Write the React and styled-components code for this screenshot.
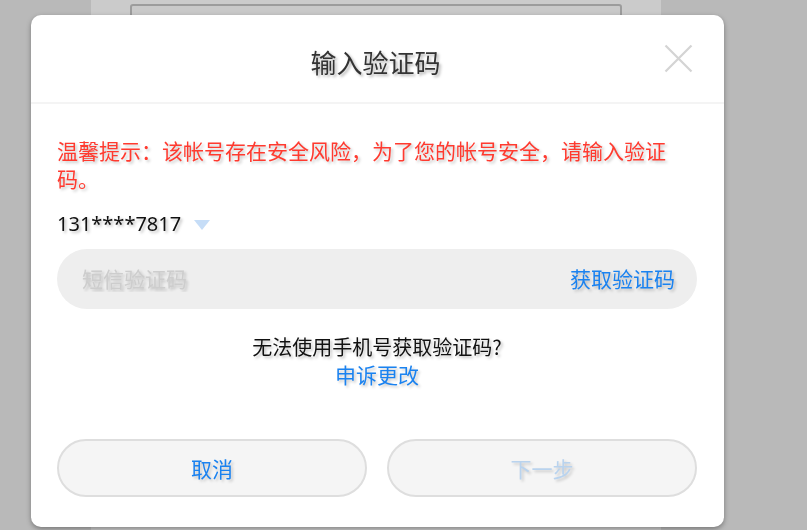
import React from "react";
import styled, { createGlobalStyle } from "styled-components";

const Global = createGlobalStyle`
  html, body { margin: 0; padding: 0; }
  body {
    background: #b9b9b9;
    overflow: hidden;
    font-family: "Noto Sans CJK SC", "Noto Sans", sans-serif;
  }
`;

const Page = styled.div`
  height: 530px;
  display: flex;
  padding-left: 91px;
`;

const BackPanel = styled.div`
  width: 570px;
  height: 100%;
  background: #cbcbcb;
  padding: 4px 0 0 39px;
  box-sizing: border-box;
`;

const BackBox = styled.div`
  width: 492px;
  height: 30px;
  border: 2px solid #9c9c9c;
  border-radius: 3px;
  box-sizing: border-box;
  background: #c9c9c9;
`;

const Dialog = styled.div`
  position: fixed;
  left: 31px;
  top: 15px;
  width: 693px;
  height: 512px;
  background: #fff;
  border-radius: 10px;
  box-shadow: 0 2px 5px rgba(0, 0, 0, 0.35);
  display: flex;
  flex-direction: column;
`;

const Header = styled.div`
  position: relative;
  height: 87px;
  display: flex;
  align-items: center;
  justify-content: center;
  border-bottom: 2px solid #f4f4f4;
`;

const Title = styled.h1`
  margin: 0;
  font-size: 26px;
  font-weight: 400;
  color: #333;
  line-height: 34px;
  text-shadow: 2px 2px 3px rgba(0, 0, 0, 0.3);
  padding-top: 6px;
  margin-left: -4px;
`;

const Close = styled.button`
  position: absolute;
  right: 31px;
  top: 29px;
  width: 29px;
  height: 29px;
  padding: 0;
  border: none;
  background: transparent;
  display: flex;
  cursor: pointer;
`;

const Body = styled.div`
  flex: 1;
  display: flex;
  flex-direction: column;
  padding: 32px 27px 30px 26px;
`;

const Tip = styled.p`
  margin: 0;
  max-width: 622px;
  font-size: 21px;
  line-height: 28px;
  color: #ff3a2f;
  text-shadow: 2px 2px 3px rgba(0, 0, 0, 0.22);
`;

const PhoneRow = styled.div`
  margin-top: 18px;
  display: flex;
  align-items: center;
  gap: 13px;
  height: 28px;
`;

const Phone = styled.span`
  font-family: "Noto Sans", "Noto Sans CJK SC", sans-serif;
  font-size: 20px;
  line-height: 28px;
  color: #111;
  text-shadow: 2px 2px 3px rgba(0, 0, 0, 0.25);
`;

const Caret = styled.span`
  width: 0;
  height: 0;
  border-left: 8px solid transparent;
  border-right: 8px solid transparent;
  border-top: 10px solid #c6ddf7;
  margin-top: 2px;
`;

const Field = styled.div`
  margin-top: 11px;
  height: 60px;
  border-radius: 30px;
  background: #eeeeee;
  display: flex;
  align-items: center;
  padding: 0 22px 3px 25px;
  box-sizing: border-box;
`;

const Input = styled.input`
  flex: 1;
  min-width: 0;
  border: none;
  outline: none;
  background: transparent;
  font-family: inherit;
  font-size: 21px;
  line-height: 28px;
  height: 28px;
  color: #333;
  padding: 0;
  &::placeholder {
    color: #cdcdcd;
    text-shadow: 2px 2px 3px rgba(0, 0, 0, 0.2);
  }
`;

const LinkText = styled.a`
  font-size: ${(p) => p.$size || 21}px;
  line-height: 28px;
  color: #1a82f0;
  text-decoration: none;
  text-shadow: 2px 2px 3px rgba(0, 0, 0, 0.22);
  cursor: pointer;
`;

const Help = styled.div`
  margin-top: 25px;
  display: flex;
  flex-direction: column;
  align-items: center;
`;

const HelpText = styled.span`
  font-size: 20px;
  line-height: 26px;
  color: #111;
  text-shadow: 2px 2px 3px rgba(0, 0, 0, 0.25);
`;

const Actions = styled.div`
  margin-top: auto;
  display: grid;
  grid-template-columns: 1fr 1fr;
  gap: 20px;
`;

const Btn = styled.button`
  height: 58px;
  border-radius: 29px;
  border: 2px solid #dedede;
  background: #f5f5f5;
  font-family: inherit;
  font-size: 21px;
  color: ${(p) => (p.$disabled ? "#b9d3ee" : "#1a82f0")};
  text-shadow: 2px 2px 3px rgba(0, 0, 0, 0.2);
  cursor: pointer;
`;

export default function App() {
  return (
    <>
      <Global />
      <Page>
        <BackPanel>
          <BackBox />
        </BackPanel>
      </Page>
      <Dialog>
        <Header>
          <Title>输入验证码</Title>
          <Close aria-label="关闭">
            <svg width="29" height="29" viewBox="0 0 29 29">
              <path d="M1.5 1.5 L27.5 27.5 M27.5 1.5 L1.5 27.5" stroke="#d4d4d4" strokeWidth="2.2" />
            </svg>
          </Close>
        </Header>
        <Body>
          <Tip>温馨提示：该帐号存在安全风险，为了您的帐号安全，请输入验证码。</Tip>
          <PhoneRow>
            <Phone>131****7817</Phone>
            <Caret />
          </PhoneRow>
          <Field>
            <Input placeholder="短信验证码" />
            <LinkText>获取验证码</LinkText>
          </Field>
          <Help>
            <HelpText>无法使用手机号获取验证码?</HelpText>
            <LinkText>申诉更改</LinkText>
          </Help>
          <Actions>
            <Btn>取消</Btn>
            <Btn $disabled>下一步</Btn>
          </Actions>
        </Body>
      </Dialog>
    </>
  );
}
